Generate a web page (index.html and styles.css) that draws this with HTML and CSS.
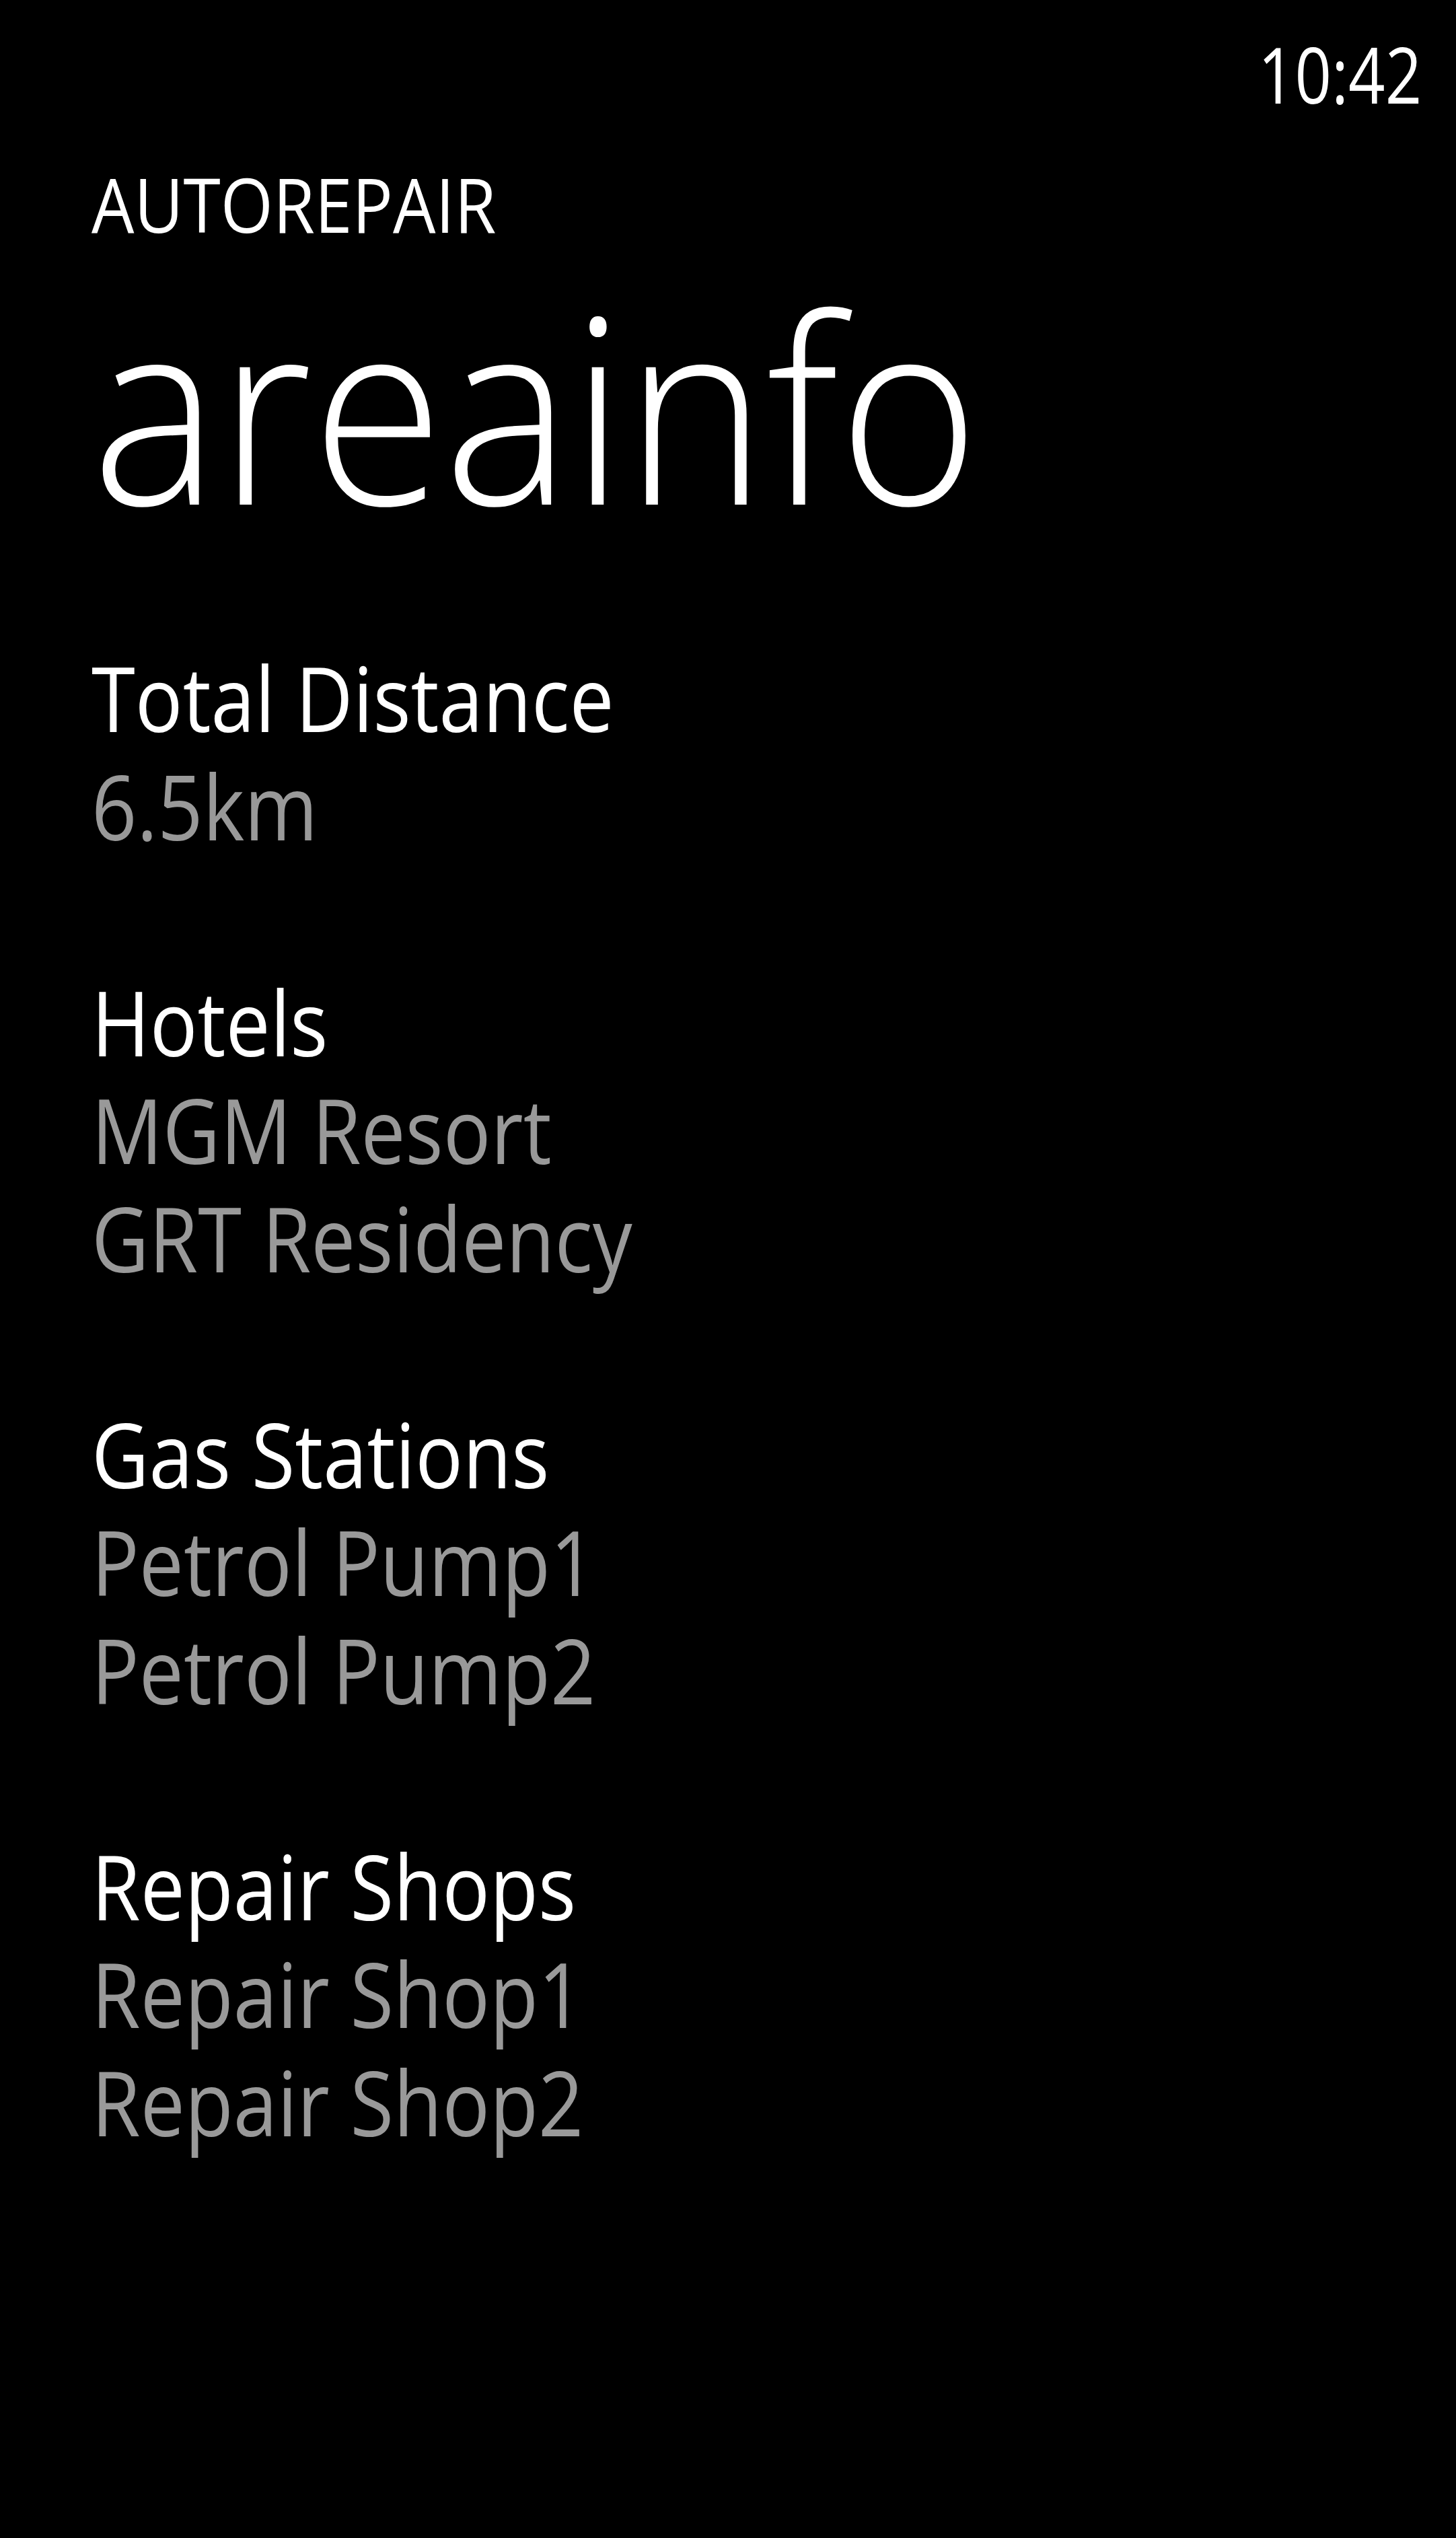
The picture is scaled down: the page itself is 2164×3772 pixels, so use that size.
FILE: index.html
```html
<!DOCTYPE html>
<html lang="en">
<head>
<meta charset="utf-8">
<title>areainfo</title>
<link rel="stylesheet" href="styles.css">
</head>
<body>
<div class="statusbar"><span class="clock">10:42</span></div>
<main class="page">
  <div class="app-title">AUTOREPAIR</div>
  <h1 class="page-title">areainfo</h1>
  <div class="content">
    <section class="group">
      <div class="label">Total Distance</div>
      <div class="value">6.5km</div>
    </section>
    <section class="group">
      <div class="label">Hotels</div>
      <div class="value">MGM Resort</div>
      <div class="value">GRT Residency</div>
    </section>
    <section class="group">
      <div class="label">Gas Stations</div>
      <div class="value">Petrol Pump1</div>
      <div class="value">Petrol Pump2</div>
    </section>
    <section class="group">
      <div class="label">Repair Shops</div>
      <div class="value">Repair Shop1</div>
      <div class="value">Repair Shop2</div>
    </section>
  </div>
</main>
</body>
</html>
```
FILE: styles.css
```css
html, body {
  margin: 0;
  padding: 0;
  background: #000;
}
body {
  width: 2164px;
  min-height: 3772px;
  color: #fff;
  font-family: "Open Sans", "Noto Sans", sans-serif;
  overflow: hidden;
}
.statusbar {
  display: flex;
  justify-content: flex-end;
  padding: 30px 51px 0 0;
  height: 160px;
}
.clock {
  display: block;
  font-size: 115px;
  line-height: 160px;
  transform: scaleX(0.83);
  transform-origin: 100% 0;
}
.page {
  padding-left: 136px;
}
.app-title {
  margin-top: 53px;
  font-size: 111px;
  line-height: 120px;
  white-space: nowrap;
  transform: scaleX(0.904);
  transform-origin: 0 0;
}
.page-title {
  margin: 28px 0 0 0;
  font-size: 385px;
  font-weight: 300;
  line-height: 420px;
  white-space: nowrap;
  transform: scaleX(0.926);
  transform-origin: 0 0;
}
.content {
  margin-top: 146px;
  display: flex;
  flex-direction: column;
  gap: 160.5px;
}
.group {
  display: flex;
  flex-direction: column;
}
.label, .value {
  font-size: 133px;
  line-height: 160.5px;
  white-space: nowrap;
  transform: scaleX(0.885);
  transform-origin: 0 0;
}
.label {
  color: #fff;
}
.value {
  color: #999;
}
```
